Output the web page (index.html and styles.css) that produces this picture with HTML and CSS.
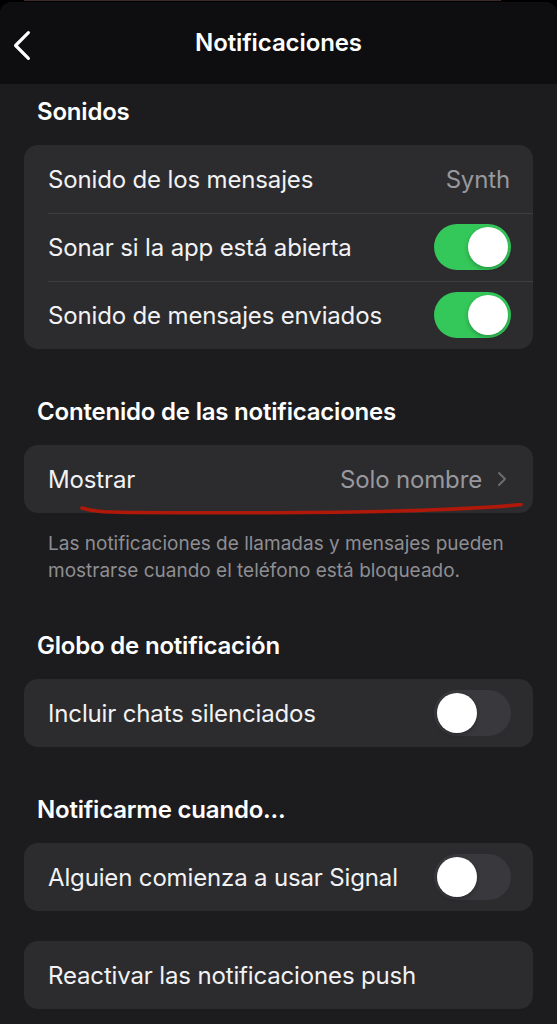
FILE: index.html
```html
<!DOCTYPE html>
<html lang="es">
<head>
<meta charset="utf-8">
<title>Notificaciones</title>
<link rel="stylesheet" href="styles.css">
</head>
<body>
<div class="behind"><div class="behind-edge"></div></div>
<div class="sheet">
  <header class="navbar">
    <svg class="back" width="24" height="36" viewBox="0 0 24 36" aria-hidden="true">
      <path d="M18.4 4.6 L5.6 17.5 L18.4 30.4" fill="none" stroke="#ffffff" stroke-width="3.2" stroke-linecap="round" stroke-linejoin="round"/>
    </svg>
    <h1 class="title">Notificaciones</h1>
  </header>
  <main class="content">
    <h2 class="section-title first">Sonidos</h2>
    <div class="card">
      <div class="row"><span class="label">Sonido de los mensajes</span><span class="value">Synth</span></div>
      <div class="row"><span class="label">Sonar si la app está abierta</span><span class="toggle on"><span class="knob"></span></span></div>
      <div class="row"><span class="label">Sonido de mensajes enviados</span><span class="toggle on"><span class="knob"></span></span></div>
    </div>

    <h2 class="section-title">Contenido de las notificaciones</h2>
    <div class="card annotated">
      <div class="row"><span class="label">Mostrar</span><span class="value">Solo nombre</span>
        <svg class="chev" width="12" height="16" viewBox="0 0 12 16" aria-hidden="true"><path d="M3 2 L9 8 L3 14" fill="none" stroke="#6c6c70" stroke-width="2" stroke-linecap="round" stroke-linejoin="round"/></svg>
      </div>
      <svg class="scribble" width="557" height="20" viewBox="0 0 557 20" aria-hidden="true">
        <path d="M82 5 C 92 8, 100 9, 130 9.5 C 220 10, 300 10, 380 8.5 C 440 7, 490 5, 521 1.5" fill="none" stroke="#b0180a" stroke-width="3.6" stroke-linecap="round"/>
      </svg>
    </div>
    <p class="footnote">Las notificaciones de llamadas y mensajes pueden mostrarse cuando el teléfono está bloqueado.</p>

    <h2 class="section-title tight">Globo de notificación</h2>
    <div class="card">
      <div class="row"><span class="label">Incluir chats silenciados</span><span class="toggle"><span class="knob"></span></span></div>
    </div>

    <h2 class="section-title">Notificarme cuando...</h2>
    <div class="card">
      <div class="row"><span class="label">Alguien comienza a usar Signal</span><span class="toggle"><span class="knob"></span></span></div>
    </div>
    <div class="card spaced">
      <div class="row"><span class="label">Reactivar las notificaciones push</span></div>
    </div>
  </main>
</div>
</body>
</html>
```
FILE: styles.css
```css
* { box-sizing: border-box; }
html, body {
  margin: 0;
  padding: 0;
  background: #000000;
  font-family: Inter, "Noto Sans", "Liberation Sans", sans-serif;
  -webkit-font-smoothing: antialiased;
}
.behind {
  height: 2px;
  padding: 0 56px 0 24px;
}
.behind-edge {
  height: 1px;
  background: #3a2a2c;
}
.sheet {
  background: #1c1c1e;
  border-radius: 12px 12px 0 0;
  overflow: hidden;
  min-height: 1022px;
}
.navbar {
  position: relative;
  height: 82px;
  background: #0e0e10;
  display: flex;
  align-items: center;
  justify-content: center;
}
.back {
  position: absolute;
  left: 10px;
  top: 26px;
}
.title {
  margin: 0;
  font-size: 24px;
  font-weight: 600;
  color: #ffffff;
  letter-spacing: -0.1px;
  padding-bottom: 1px;
}
.content {
  padding: 0 24px 40px;
}
.section-title {
  margin: 49px 0 19px 13px;
  font-size: 24px;
  line-height: 28px;
  font-weight: 600;
  color: #ffffff;
  letter-spacing: -0.2px;
}
.section-title.first {
  margin-top: 14px;
}
.section-title.tight {
  margin-top: 48px;
}
.card {
  position: relative;
  background: #2c2c2e;
  border-radius: 14px;
}
.card.spaced {
  margin-top: 30px;
}
.row {
  height: 68px;
  display: flex;
  align-items: center;
  padding: 0 23px 0 24px;
  position: relative;
}
.row + .row::before {
  content: "";
  position: absolute;
  left: 24px;
  right: 0;
  top: 0;
  height: 1px;
  background: #3d3d40;
}
.label {
  flex: 1;
  font-size: 24px;
  color: #f2f2f4;
  letter-spacing: -0.15px;
  white-space: nowrap;
}
.value {
  font-size: 24px;
  color: #98989e;
  letter-spacing: -0.15px;
}
.chev {
  margin-left: 14px;
  margin-right: 2px;
}
.toggle {
  width: 77px;
  height: 46px;
  border-radius: 23px;
  background: #39393d;
  padding: 3px;
  display: flex;
  justify-content: flex-start;
  margin-right: -1px;
}
.toggle.on {
  background: #34c759;
  justify-content: flex-end;
}
.knob {
  width: 40px;
  height: 40px;
  border-radius: 50%;
  background: #ffffff;
  box-shadow: 0 2px 4px rgba(0,0,0,0.25);
}
.scribble {
  position: absolute;
  left: -24px;
  top: 58px;
}
.footnote {
  margin: 0;
  padding: 17px 24px 0 24px;
  font-size: 19px;
  line-height: 27px;
  color: #8e8e93;
}
```
